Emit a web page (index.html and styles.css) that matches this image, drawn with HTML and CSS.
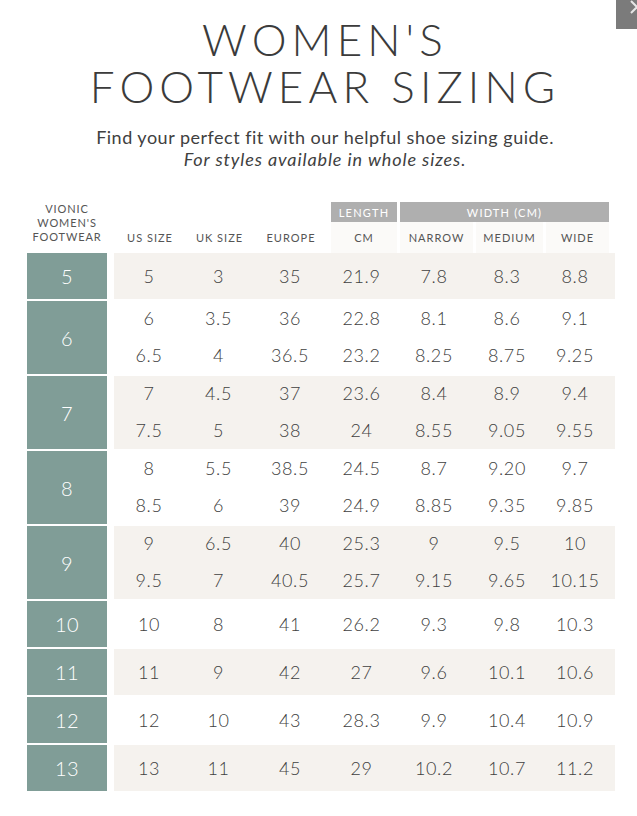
FILE: index.html
```html
<!DOCTYPE html>
<html lang="en">
<head>
<meta charset="utf-8">
<title>Women's Footwear Sizing</title>
<link rel="stylesheet" href="styles.css">
</head>
<body>
<div class="close" aria-label="Close">
  <svg width="30" height="29" viewBox="0 0 30 29"><path d="M15 1 L27 13 M27 1 L15 13" stroke="#e6e6e6" stroke-width="2" fill="none"/></svg>
</div>
<main class="page">
  <header class="intro">
    <h1 class="title"><span class="tl">WOMEN'S</span><span class="tl">FOOTWEAR SIZING</span></h1>
    <p class="lead">Find your perfect fit with our helpful shoe sizing guide.<br><em>For styles available in whole sizes.</em></p>
  </header>

  <section class="chart">
    <div class="head">
      <div class="brand">VIONIC<br>WOMEN'S<br>FOOTWEAR</div>
      <div class="head-data">
        <div class="group g-length">LENGTH</div>
        <div class="group g-width">WIDTH (CM)</div>
        <div class="lbl">US SIZE</div>
        <div class="lbl">UK SIZE</div>
        <div class="lbl">EUROPE</div>
        <div class="lbl shade">CM</div>
        <div class="lbl shade">NARROW</div>
        <div class="lbl shade">MEDIUM</div>
        <div class="lbl shade">WIDE</div>
      </div>
    </div>

    <div class="row single">
      <div class="size">5</div>
      <div class="data tint"><span>5</span><span>3</span><span>35</span><span>21.9</span><span>7.8</span><span>8.3</span><span>8.8</span></div>
    </div>
    <div class="row double">
      <div class="size">6</div>
      <div class="data"><span>6</span><span>3.5</span><span>36</span><span>22.8</span><span>8.1</span><span>8.6</span><span>9.1</span><span>6.5</span><span>4</span><span>36.5</span><span>23.2</span><span>8.25</span><span>8.75</span><span>9.25</span></div>
    </div>
    <div class="row double">
      <div class="size">7</div>
      <div class="data tint"><span>7</span><span>4.5</span><span>37</span><span>23.6</span><span>8.4</span><span>8.9</span><span>9.4</span><span>7.5</span><span>5</span><span>38</span><span>24</span><span>8.55</span><span>9.05</span><span>9.55</span></div>
    </div>
    <div class="row double">
      <div class="size">8</div>
      <div class="data"><span>8</span><span>5.5</span><span>38.5</span><span>24.5</span><span>8.7</span><span>9.20</span><span>9.7</span><span>8.5</span><span>6</span><span>39</span><span>24.9</span><span>8.85</span><span>9.35</span><span>9.85</span></div>
    </div>
    <div class="row double">
      <div class="size">9</div>
      <div class="data tint"><span>9</span><span>6.5</span><span>40</span><span>25.3</span><span>9</span><span>9.5</span><span>10</span><span>9.5</span><span>7</span><span>40.5</span><span>25.7</span><span>9.15</span><span>9.65</span><span>10.15</span></div>
    </div>
    <div class="row single">
      <div class="size">10</div>
      <div class="data"><span>10</span><span>8</span><span>41</span><span>26.2</span><span>9.3</span><span>9.8</span><span>10.3</span></div>
    </div>
    <div class="row single">
      <div class="size">11</div>
      <div class="data tint"><span>11</span><span>9</span><span>42</span><span>27</span><span>9.6</span><span>10.1</span><span>10.6</span></div>
    </div>
    <div class="row single">
      <div class="size">12</div>
      <div class="data"><span>12</span><span>10</span><span>43</span><span>28.3</span><span>9.9</span><span>10.4</span><span>10.9</span></div>
    </div>
    <div class="row single">
      <div class="size">13</div>
      <div class="data tint"><span>13</span><span>11</span><span>45</span><span>29</span><span>10.2</span><span>10.7</span><span>11.2</span></div>
    </div>
  </section>
</main>
</body>
</html>
```

FILE: styles.css
```css
html, body {
  margin: 0;
  padding: 0;
  background: #ffffff;
  overflow: hidden;
}

body {
  font-family: Lato, "Open Sans", sans-serif;
  color: #444444;
  width: 637px;
  height: 816px;
  position: relative;
}

.close {
  position: absolute;
  top: 0;
  left: 616px;
  width: 30px;
  height: 29px;
  background: #7b7b7b;
  overflow: hidden;
}

.close svg {
  display: block;
}

.page {
  padding-top: 16px;
}

.intro {
  text-align: center;
  padding-left: 13px;
}

.title {
  margin: 0;
  font-family: Lato, sans-serif;
  font-weight: 300;
  font-size: 44px;
  letter-spacing: 5.1px;
  color: #3b3b3b;
}

.tl {
  display: block;
  height: 47px;
  line-height: 47px;
}

.lead {
  margin: 16px 0 0;
  font-size: 18px;
  line-height: 22px;
  letter-spacing: 0.5px;
  color: #404040;
}

.lead em {
  font-style: italic;
  letter-spacing: 0.9px;
}

.chart {
  margin: 32px 0 0 27px;
  width: 589px;
}

.head {
  display: flex;
  gap: 8px;
  align-items: flex-end;
}

.brand {
  width: 80px;
  text-align: center;
  font-size: 11px;
  line-height: 14px;
  letter-spacing: 0.9px;
  color: #555555;
  padding-bottom: 9px;
}

.head-data {
  display: grid;
  grid-template-columns: 70px 69px 74px 69px 76px 70px 66px;
  grid-template-rows: 20px 31px;
  padding-right: 7px;
  width: 494px;
}

.group {
  background: #afafaf;
  color: #ffffff;
  font-size: 11px;
  letter-spacing: 1.2px;
  display: flex;
  align-items: center;
  justify-content: center;
}

.g-length {
  grid-column: 4;
  grid-row: 1;
  margin-left: 3px;
}

.g-width {
  grid-column: 5 / span 3;
  grid-row: 1;
  margin-left: 3px;
}

.lbl {
  grid-row: 2;
  font-size: 11px;
  letter-spacing: 1px;
  color: #555555;
  display: flex;
  align-items: center;
  justify-content: center;
}

.lbl:nth-of-type(3) { grid-column: 1; }
.lbl:nth-of-type(4) { grid-column: 2; }
.lbl:nth-of-type(5) { grid-column: 3; }

.lbl.shade {
  background: #fbfaf8;
  margin-left: 3px;
}

.row {
  display: flex;
  gap: 7px;
  margin-top: 2px;
}

.head + .row {
  margin-top: 0;
}

.size {
  flex: 0 0 80px;
  background: #809d97;
  color: #ffffff;
  font-size: 20px;
  font-weight: 300;
  letter-spacing: 0.5px;
  display: flex;
  align-items: center;
  justify-content: center;
}

.data {
  flex: 0 0 494px;
  padding-right: 7px;
  display: grid;
  grid-template-columns: 70px 69px 74px 69px 76px 70px 66px;
  font-size: 18px;
  font-weight: 300;
  letter-spacing: 0.6px;
  color: #404040;
}

.data span {
  display: flex;
  align-items: center;
  justify-content: center;
}

.data.tint {
  background: #f5f2ee;
}

.single .data {
  height: 46px;
  grid-template-rows: 46px;
}

.double .data {
  height: 73px;
  grid-template-rows: 34px 39px;
}
```
